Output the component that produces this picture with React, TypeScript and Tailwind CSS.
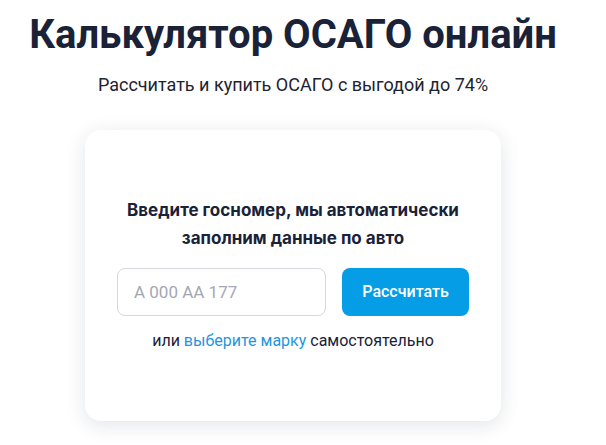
import React from "react";

export default function App() {
  return (
    <div className="min-h-[445px] bg-white font-['Roboto',sans-serif] text-[#1a2238]">
      <div className="w-[586px] flex flex-col items-center pt-[7px]">
        <h1 className="text-[40px] leading-[56px] font-bold">Калькулятор ОСАГО онлайн</h1>
        <p className="mt-[10px] text-[18px] leading-6 text-[#1e2330]">
          Рассчитать и купить ОСАГО с выгодой до 74%
        </p>
        <div className="mt-[33px] w-[416px] h-[291px] bg-white rounded-[16px] shadow-[0_4px_20px_rgba(20,30,60,0.12)] flex flex-col items-center pt-[66px]">
          <div className="text-[17px] leading-[28px] font-bold text-center w-[350px] text-[#1a2238] font-['Inter',sans-serif]">
            Введите госномер, мы автоматически заполним данные по авто
          </div>
          <div className="mt-[16px] flex gap-4">
            <input
              className="w-[209px] h-[48px] rounded-[8px] border border-[#d5d8e0] px-4 text-[17px] outline-none placeholder:text-[#a3a8b4]"
              placeholder="А 000 АА 177"
            />
            <button className="w-[127px] h-[48px] rounded-[8px] bg-[#049de6] text-white text-[16px] font-medium">
              Рассчитать
            </button>
          </div>
          <p className="mt-[13px] text-[16px] leading-6 text-[#1a2238]">
            или <span className="text-[#1f96de]">выберите марку</span> самостоятельно
          </p>
        </div>
      </div>
    </div>
  );
}
